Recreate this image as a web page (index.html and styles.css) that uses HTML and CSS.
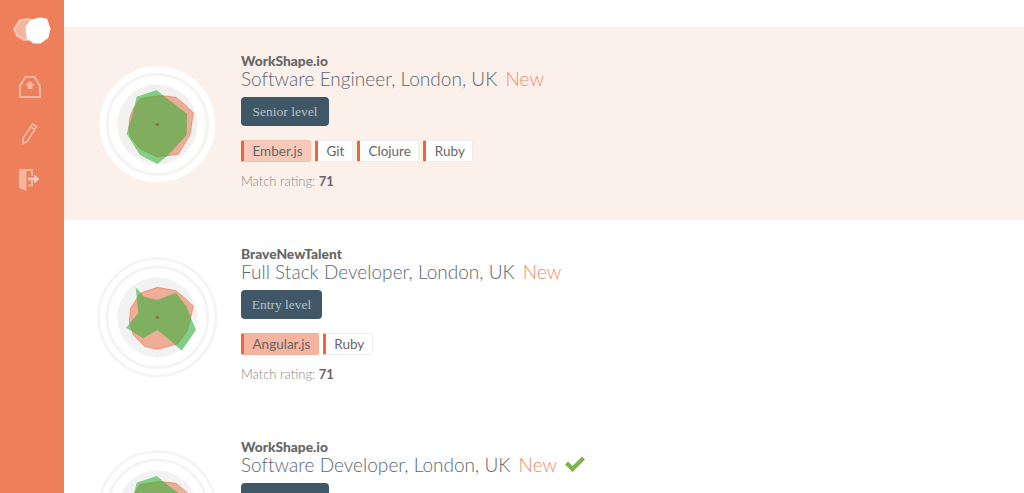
FILE: index.html
```html
<!DOCTYPE html>
<html lang="en">
<head>
<meta charset="utf-8">
<title>Matches</title>
<link rel="stylesheet" href="styles.css">
</head>
<body>
<svg class="defs" width="0" height="0" aria-hidden="true">
  <defs>
    <g id="rings">
      <g fill="none" stroke="#f4f4f4">
        <circle cx="202" cy="202" r="176" stroke-width="8"/>
        <circle cx="202" cy="202" r="151" stroke-width="9"/>
      </g>
      <circle cx="202" cy="202" r="120" fill="#f2f2f2"/>
      <g stroke="#e9e9e9" stroke-width="1" opacity=".5">
        <path d="M202 22V382M22 202H382M75 75L329 329M329 75L75 329"/>
      </g>
    </g>
    <g id="ringsLight">
      <circle cx="202" cy="202" r="174" fill="#fff"/>
      <circle cx="202" cy="202" r="150" fill="none" stroke="#f6f4f3" stroke-width="10"/>
      <circle cx="202" cy="202" r="120" fill="#f2f1f0"/>
      <g stroke="#eee" stroke-width="1" opacity=".5">
        <path d="M202 28V376M28 202H376M79 79L325 325M325 79L79 325"/>
      </g>
    </g>
    <g id="shapeA">
      <polygon class="red" points="205,116 225,117 258,121 285,143 310,167 300,234 265,292 225,297 202,300 150,275 122,240 116,215 120,180 130,155 150,125"/>
      <polygon class="green" points="200,99 140,119 128,170 110,231 150,294 202,321 235,294 290,234 291,170 225,119"/>
      <circle cx="202" cy="202" r="5" fill="#8a7436"/>
    </g>
    <g id="shapeB">
      <polygon class="red" points="202,112 258,122 285,145 310,168 302,205 290,245 262,282 202,298 165,290 130,255 118,215 122,175 150,130"/>
      <polygon class="green" points="137,112 162,140 202,150 258,128 290,170 303,205 318,240 275,302 245,275 202,240 160,265 108,233 145,190"/>
      <circle cx="202" cy="202" r="5" fill="#8a7436"/>
    </g>
  </defs>
</svg>
<div class="app">
  <nav class="sidebar">
    <svg class="logo" viewBox="0 0 40 30" width="40" height="30">
      <polygon fill="#fff" fill-opacity=".42" stroke="#fff" stroke-opacity=".42" stroke-width="2" stroke-linejoin="round" points="8,4 16,3 23,5 24,24 12,24 5,20 2,13"/>
      <polygon fill="#fff" stroke="#fff" stroke-width="3" stroke-linejoin="round" points="20,5 28,3 34,4 37,13 35,21 28,26 22,26 16,21 15,11"/>
    </svg>
    <svg class="nav-icon nav-inbox" viewBox="0 0 24 24" width="24" height="24">
      <path fill="none" stroke="#fff" stroke-opacity=".42" stroke-width="2" d="M2 11L7.500 2H16.500L22 11V22H2Z"/>
      <path fill="#fff" fill-opacity=".42" d="M12 6L17 10.500H14.500V14H9.500V10.500H7Z"/>
    </svg>
    <svg class="nav-icon" viewBox="0 0 24 24" width="24" height="24">
      <path fill="none" stroke="#fff" stroke-opacity=".42" stroke-width="1.800" d="M15.500 3L19.500 5.500L10.500 20L6 22.500L6 17.500ZM13.800 6L18 8.500"/>
    </svg>
    <svg class="nav-icon nav-door" viewBox="0 0 24 24" width="24" height="24">
      <path fill="#fff" fill-opacity=".42" d="M2 1H16V8H14V3H9.500V23L2 20ZM11.500 16.500H14V13H16V18.500H11.500Z"/>
      <path fill="#fff" fill-opacity=".6" d="M11 9.500H17V6.500L22.500 11L17 15.500V12.500H11Z"/>
    </svg>
  </nav>
  <main class="list">
    <article class="job job-active">
      <svg class="chart" viewBox="0 0 405 405" width="135" height="135"><use href="#ringsLight"/><use href="#shapeA"/></svg>
      <div class="info">
        <div class="company">WorkShape.io</div>
        <h2 class="title">Software Engineer, London, UK <span class="new">New</span></h2>
        <div class="level level-senior">Senior level</div>
        <ul class="tags">
          <li class="tag tag-match-soft">Ember.js</li>
          <li class="tag">Git</li>
          <li class="tag">Clojure</li>
          <li class="tag">Ruby</li>
        </ul>
        <div class="rating">Match rating: <b>71</b></div>
      </div>
    </article>
    <article class="job">
      <svg class="chart" viewBox="0 0 405 405" width="135" height="135"><use href="#rings"/><use href="#shapeB"/></svg>
      <div class="info">
        <div class="company">BraveNewTalent</div>
        <h2 class="title">Full Stack Developer, London, UK <span class="new">New</span></h2>
        <div class="level level-entry">Entry level</div>
        <ul class="tags">
          <li class="tag tag-match">Angular.js</li>
          <li class="tag">Ruby</li>
        </ul>
        <div class="rating">Match rating: <b>71</b></div>
      </div>
    </article>
    <article class="job">
      <svg class="chart" viewBox="0 0 405 405" width="135" height="135"><use href="#rings"/><use href="#shapeA"/></svg>
      <div class="info">
        <div class="company">WorkShape.io</div>
        <h2 class="title">Software Developer, London, UK <span class="new">New</span>
          <svg class="check" viewBox="0 0 20 16" width="20" height="16"><path fill="#7ab648" d="M0 8.500L3 5.500L7.500 10L17 0.500L20 3.500L7.500 16Z"/></svg>
        </h2>
        <div class="level level-senior">Senior level</div>
      </div>
    </article>
  </main>
</div>
</body>
</html>
```
FILE: styles.css
```css
* { box-sizing: border-box; }
html, body { margin: 0; height: 100%; overflow: hidden; }
body { font-family: Lato, "Liberation Sans", sans-serif; color: #666; background: #fff; }
.defs { position: absolute; }
.red { fill: #e8673c; fill-opacity: .5; stroke: #e8673c; stroke-width: 2; stroke-opacity: .8; }
.green { fill: rgb(39, 177, 50); fill-opacity: .55; }
.app { display: flex; height: 493px; overflow: hidden; }
.sidebar { flex: 0 0 64px; background: #ed7f5b; display: flex; flex-direction: column; align-items: center; padding-top: 16px; }
.logo { margin-bottom: 29px; }
.nav-icon { margin-bottom: 22px; margin-right: 6px; }
.nav-inbox { margin-right: 5px; }
.nav-door { margin-top: 1px; }
.list { flex: 1; padding-top: 27px; }
.job { height: 193px; display: flex; align-items: flex-start; padding: 26px 0 0 26px; }
.job-active { background: #fcf0eb; }
.chart { flex: none; margin-top: 4px; }
.info { margin-left: 16px; }
.company { font-size: 13.800px; font-weight: 900; color: #666; line-height: 16px; }
.title { margin: -1px 0 0; font-size: 19px; font-weight: 300; color: #5a6670; line-height: 21px; white-space: nowrap; letter-spacing: .03px; }
.new { color: #ee8a68; margin-left: 3px; }
.check { margin-left: 3px; vertical-align: 0; }
.level { display: flex; align-items: center; justify-content: center; height: 29px; margin-top: 8px; background: #3f5766; color: #b4c1c9; border-radius: 4px; font-family: "Liberation Serif", serif; font-size: 13.500px; }
.level-senior { width: 88px; }
.level-entry { width: 81px; }
.tags { list-style: none; margin: 14px 0 0; padding: 0; display: flex; gap: 4px; }
.tag { height: 22px; line-height: 20px; padding: 0 7.500px 0 8.500px; background: #fff; border: 1px solid #eee; border-left: 3px solid #e8673c; border-radius: 2px; font-size: 13.500px; color: #666; }
.tag-match-soft { background: #f7c9b8; border-color: #f3bfae; border-left-color: #e8673c; }
.tag-match { background: #f4b4a0; border-color: #f2ae98; border-left-color: #e8673c; }
.rating { margin-top: 11px; font-size: 13px; font-weight: 300; color: #888; line-height: 17px; }
.rating b { font-weight: 700; color: #666; }
```
